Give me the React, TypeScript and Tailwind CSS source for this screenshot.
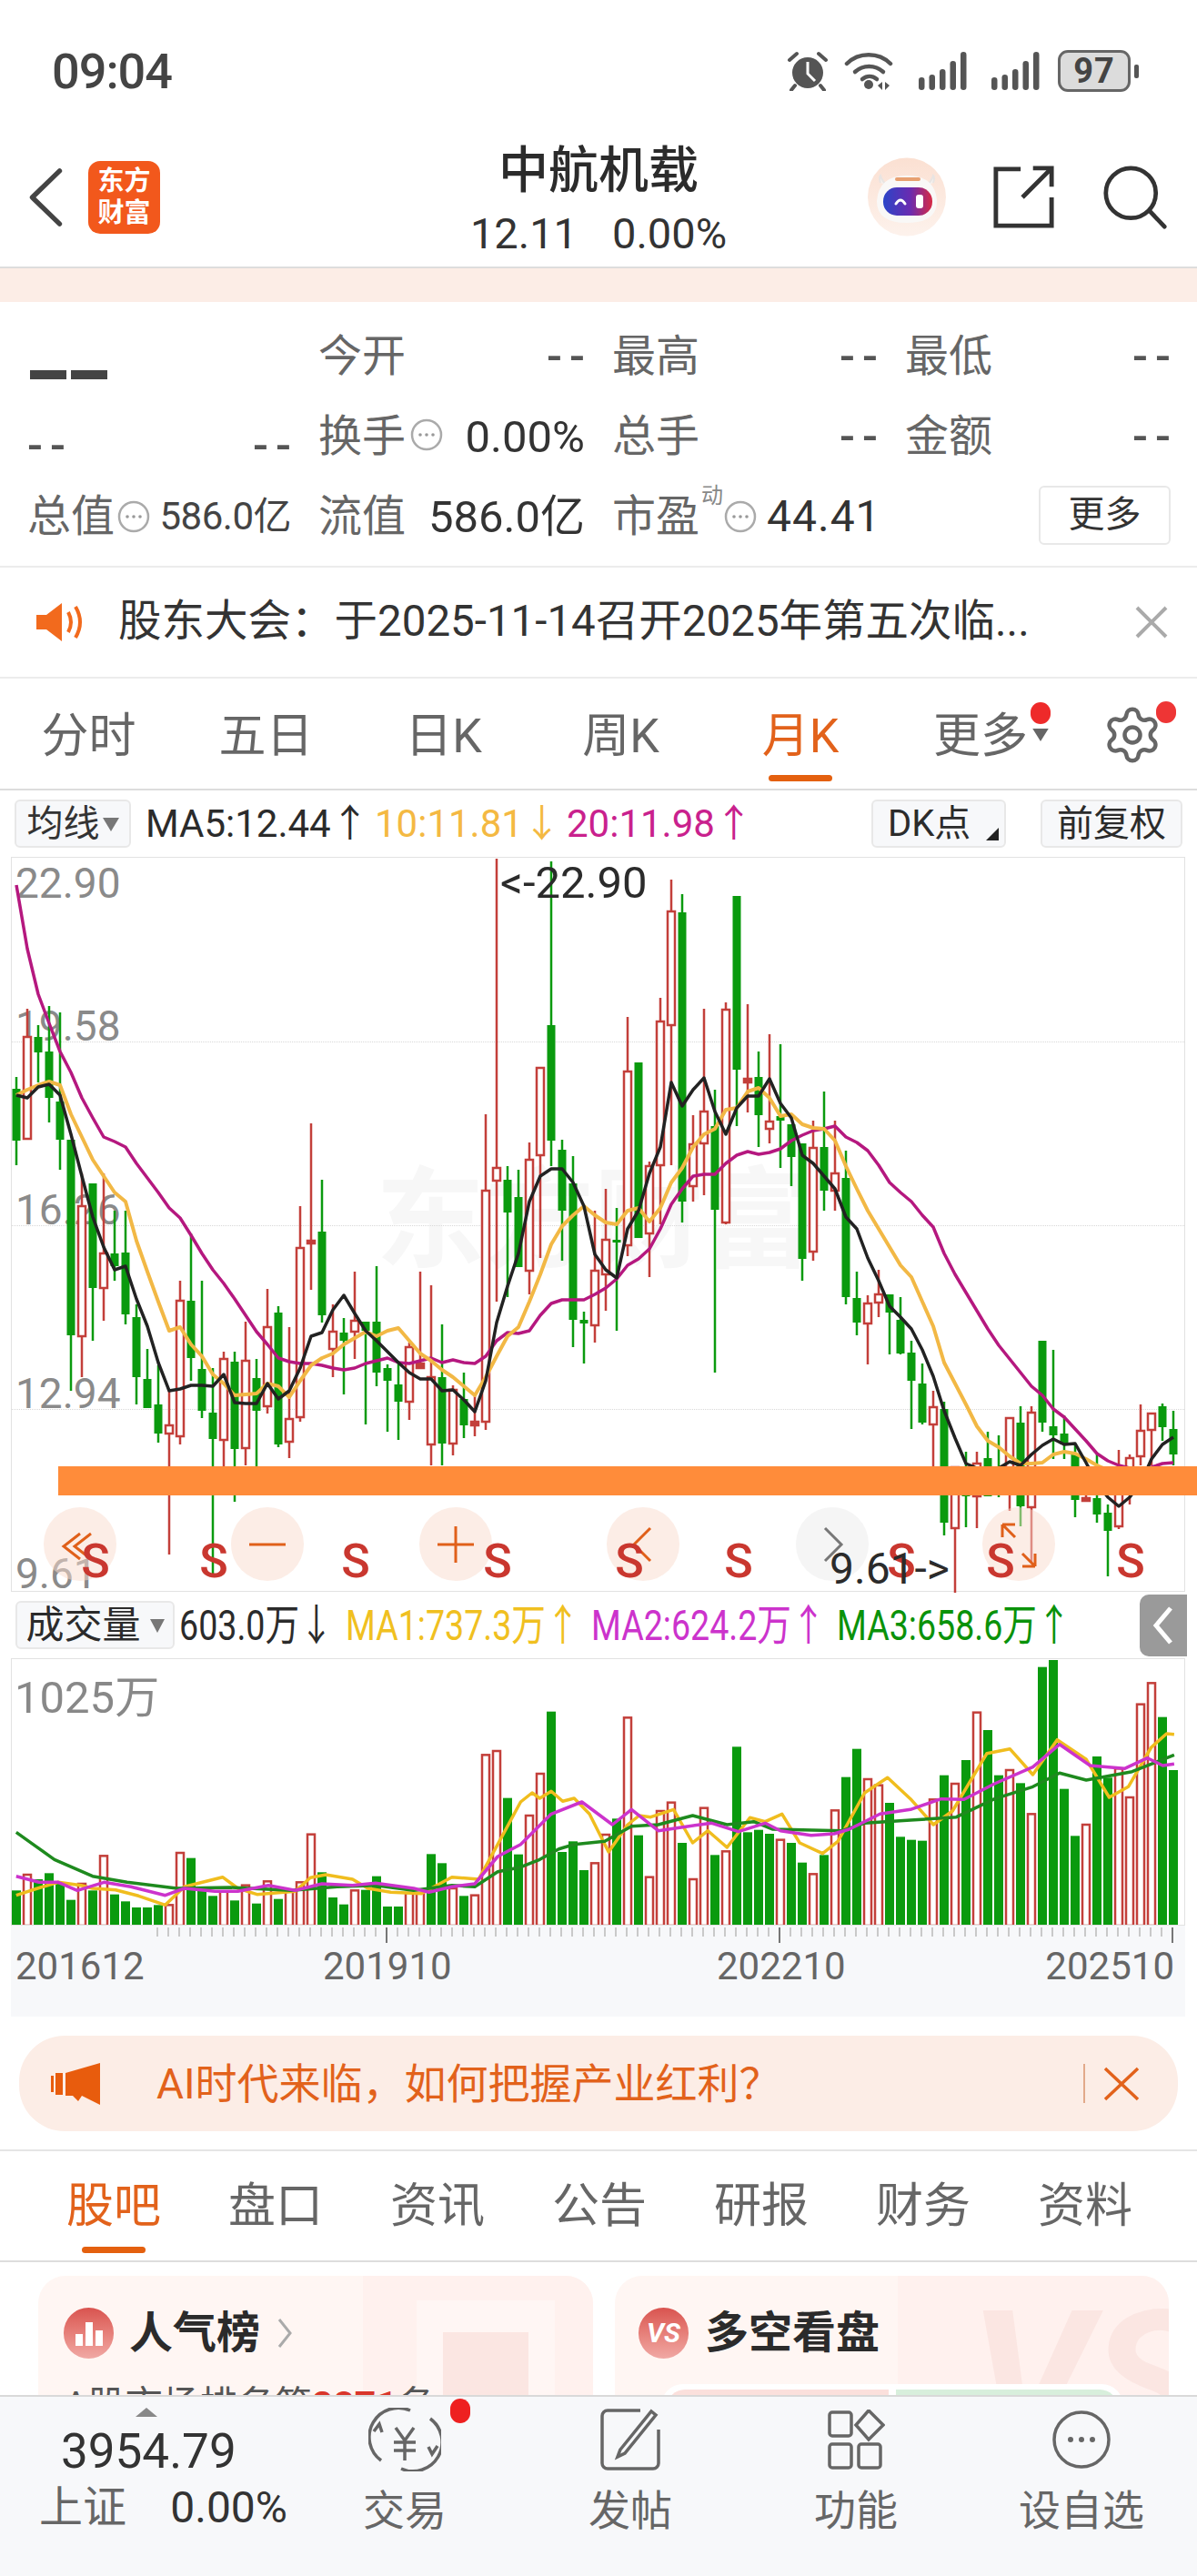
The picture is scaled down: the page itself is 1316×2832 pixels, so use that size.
import React from "react";
import { Settings } from "lucide-react";

type C = [string, number, number, number, number];
const candles: C[] = [
["g",1196,1253,1183,1280],["r",1139,1251,1108,1251],["g",1139,1156,1126,1189],["g",1155,1206,1105,1233],["g",1210,1252,1112,1285],["g",1252,1467,1252,1528],["r",1325,1468,1289,1513],["g",1300,1415,1300,1473],["r",1377,1415,1289,1451],["g",1377,1391,1330,1407],
["g",1376,1444,1330,1455],["g",1447,1513,1433,1543],["g",1515,1547,1482,1547],["g",1543,1575,1500,1585],["r",1566,1575,1527,1708],["r",1429,1578,1407,1587],["g",1429,1492,1355,1517],["g",1504,1550,1407,1558],["g",1552,1581,1503,1733],["r",1493,1582,1485,1617],
["g",1496,1592,1485,1650],["r",1495,1591,1452,1610],["g",1514,1550,1493,1643],["r",1458,1545,1416,1553],["g",1442,1587,1435,1590],["r",1559,1584,1458,1602],["r",1371,1557,1325,1562],["r",1363,1365,1234,1417],["g",1353,1445,1296,1453],["r",1463,1482,1433,1513],
["g",1464,1473,1448,1532],["r",1451,1463,1397,1493],["g",1452,1462,1452,1565],["g",1452,1508,1391,1523],["g",1503,1517,1499,1573],["g",1521,1540,1498,1582],["r",1480,1540,1475,1560],["r",1498,1503,1397,1503],["r",1513,1587,1412,1610],["g",1513,1586,1455,1610],
["r",1527,1586,1522,1599],["g",1537,1566,1508,1580],["r",1562,1566,1533,1578],["r",1308,1562,1224,1571],["r",1283,1297,943,1430],["g",1296,1332,1281,1425],["g",1315,1392,1285,1392],["r",1274,1396,1255,1422],["r",1173,1269,1173,1382],["g",1126,1253,946,1281],
["g",1263,1330,1252,1385],["g",1300,1450,1270,1480],["g",1450,1454,1441,1498],["r",1396,1456,1330,1475],["r",1362,1400,1306,1440],["g",1362,1365,1327,1462],["r",1177,1368,1117,1380],["g",1167,1360,1167,1360],["r",1281,1355,1276,1403],["r",1122,1280,1096,1345],
["r",1001,1126,966,1280],["g",1002,1320,982,1343],["r",1257,1303,1225,1320],["r",1221,1256,1108,1313],["g",1237,1329,1197,1508],["r",1109,1343,1101,1345],["g",984,1175,984,1237],["r",1185,1189,1103,1222],["g",1183,1225,1155,1260],["r",1232,1240,1136,1256],
["g",1226,1231,1147,1283],["g",1235,1271,1235,1303],["g",1256,1383,1256,1407],["r",1261,1375,1231,1385],["g",1260,1308,1199,1330],["r",1289,1308,1231,1330],["g",1294,1425,1264,1433],["g",1426,1453,1397,1467],["r",1432,1454,1423,1499],["r",1422,1431,1395,1447],
["g",1422,1442,1422,1488],["g",1450,1487,1425,1488],["g",1486,1517,1473,1570],["g",1520,1563,1498,1565],["r",1546,1565,1528,1612],["g",1548,1673,1540,1687],["r",1612,1679,1612,1750],["g",1612,1644,1595,1678],["r",1608,1644,1595,1679],["g",1602,1644,1573,1640],
["g",1612,1640,1577,1645],["r",1558,1620,1558,1660],["g",1563,1655,1545,1677],["r",1552,1656,1545,1717],["g",1473,1563,1473,1573],["g",1567,1577,1483,1603],["g",1575,1587,1555,1603],["g",1597,1648,1587,1667],["r",1646,1648,1640,1650],["g",1646,1664,1597,1673],
["g",1662,1682,1653,1732],["r",1617,1677,1593,1680],["r",1602,1640,1598,1653],["r",1572,1600,1543,1610],["r",1553,1571,1553,1610],["g",1545,1568,1542,1583],["g",1570,1598,1550,1610],
];
const ma5=[1203,1206,1194,1191,1203,1246,1292,1337,1370,1395,1391,1427,1457,1497,1528,1526,1522,1522,1523,1510,1541,1542,1542,1520,1537,1528,1503,1468,1464,1439,1423,1443,1462,1473,1485,1497,1508,1515,1515,1528,1527,1538,1551,1517,1453,1413,1377,1320,1292,1284,1284,1299,1325,1378,1395,1404,1350,1330,1289,1260,1189,1215,1197,1184,1221,1246,1217,1204,1204,1185,1212,1228,1269,1278,1292,1306,1337,1350,1382,1407,1435,1447,1460,1483,1512,1550,1580,1608,1613,1613,1613,1606,1610,1598,1588,1581,1587,1586,1607,1630,1645,1655,1645,1630,1603,1587,1579];
const ma10=[1203,1197,1192,1188,1192,1224,1249,1274,1292,1310,1320,1363,1397,1430,1462,1458,1477,1490,1510,1520,1533,1532,1531,1520,1523,1535,1517,1500,1492,1487,1477,1470,1463,1468,1462,1459,1473,1487,1495,1505,1513,1523,1533,1513,1490,1468,1458,1430,1400,1367,1347,1335,1325,1335,1343,1345,1330,1327,1342,1327,1299,1283,1260,1246,1240,1219,1217,1199,1195,1206,1226,1224,1235,1239,1240,1253,1281,1306,1330,1350,1370,1390,1403,1430,1457,1497,1520,1543,1567,1583,1590,1600,1608,1608,1607,1598,1595,1597,1603,1610,1615,1620,1620,1620,1620,1620,1620];
const ma20=[972,1042,1092,1124,1155,1178,1206,1228,1249,1254,1260,1278,1294,1310,1327,1338,1357,1377,1395,1410,1427,1445,1463,1477,1492,1496,1498,1498,1500,1503,1505,1503,1498,1495,1492,1497,1498,1495,1492,1497,1494,1497,1498,1490,1473,1464,1465,1462,1445,1432,1428,1428,1428,1422,1415,1405,1390,1383,1372,1350,1323,1306,1292,1290,1290,1278,1269,1265,1268,1266,1262,1253,1247,1242,1240,1237,1249,1255,1264,1280,1299,1310,1320,1335,1348,1377,1400,1420,1440,1460,1478,1493,1508,1523,1533,1548,1557,1570,1583,1597,1605,1610,1613,1615,1612,1608,1607];
const cx=(i:number)=>17+12*i;
const pts=(a:number[])=>a.map((y,i)=>`${cx(i)},${y}`).join(" ");

const vols:[string,number][]=[["g",1012],["r",960],["g",975],["g",955],["g",985],["g",1043],["r",990],["g",1012],["r",898],["g",1025],["g",1048],["g",1068],["g",1068],["g",1060],["r",1060],["r",888],["g",905],["g",1012],["g",1030],["r",1015],["g",1045],["r",995],["g",1055],["r",982],["g",1040],["r",1010],["r",985],["r",827],["g",952],["g",1035],["g",1058],["r",1012],["g",1010],["g",965],["g",1065],["g",1065],["r",1020],["r",1020],["g",892],["g",922],["r",1005],["g",1030],["r",1028],["r",565],["r",552],["g",707],["g",893],["r",765],["r",627],["g",422],["g",885],["g",850],["g",945],["r",922],["r",828],["g",775],["r",442],["g",830],["r",968],["r",750],["r",722],["g",855],["r",975],["r",740],["g",895],["r",883],["g",538],["g",820],["g",812],["g",825],["r",845],["g",855],["g",920],["r",958],["g",895],["r",748],["g",638],["g",545],["r",645],["r",665],["g",723],["g",835],["g",845],["g",848],["r",712],["g",632],["r",660],["g",582],["r",425],["g",483],["g",632],["r",615],["g",658],["r",760],["g",275],["g",252],["g",677],["g",832],["r",795],["g",570],["g",640],["r",610],["r",705],["r",398],["r",328],["g",440],["g",615]];
const conv=(a:number[][])=>a.map(([x,y])=>`${(x/1.19).toFixed(1)},${(1740+y/3).toFixed(1)}`).join(" ");
const vYellow=conv([[20,1028],[48,1005],[75,985],[105,995],[120,1005],[150,1010],[180,1030],[215,1060],[240,1000],[290,968],[310,1005],[335,1025],[360,1020],[385,1015],[405,970],[425,960],[460,975],[480,1005],[510,1018],[550,1022],[590,968],[625,975],[650,860],[680,720],[695,690],[705,708],[720,685],[735,718],[750,708],[770,760],[795,885],[820,795],[835,765],[850,770],[880,745],[905,855],[925,815],[950,870],[980,772],[1000,785],[1022,760],[1045,855],[1075,890],[1095,850],[1130,690],[1160,640],[1190,710],[1220,795],[1245,750],[1290,560],[1320,545],[1350,630],[1382,515],[1420,580],[1450,705],[1475,670],[1505,540],[1525,495],[1535,497]]);
const vMag=conv([[20,965],[50,985],[75,985],[100,1012],[135,985],[170,1000],[215,1028],[240,1005],[280,1015],[310,1015],[350,995],[385,1012],[420,990],[460,995],[490,988],[540,1005],[560,1018],[590,1000],[620,990],[650,900],[680,860],[720,760],[760,720],[800,795],[825,745],[860,815],[900,800],[930,790],[965,818],[1000,790],[1020,815],[1060,830],[1090,825],[1110,810],[1150,760],[1190,745],[1230,710],[1260,712],[1300,660],[1350,605],[1385,530],[1425,600],[1470,610],[1500,575],[1520,600],[1535,595]]);
const vGreen=conv([[20,820],[45,865],[70,910],[120,965],[165,985],[230,1005],[300,1002],[380,1012],[440,1000],[490,995],[540,1012],[590,995],[620,1000],[650,950],[680,935],[705,910],[730,875],[750,860],[790,850],[825,800],[860,795],[905,765],[950,795],[985,785],[1010,810],[1100,815],[1130,790],[1190,780],[1250,770],[1300,710],[1350,670],[1385,625],[1420,648],[1480,620],[1535,565]]);

const RED="#c33f3a", GREEN="#0a9a0e";

function PriceSvg(){
  return <svg className="absolute left-0 top-0" width={1291} height={808} viewBox="12 942 1291 808">
    {candles.map(([c,t,b,h,l],i)=>{
      const x=cx(i), col=c==="r"?RED:GREEN;
      return <g key={i}>
        <line x1={x} x2={x} y1={h} y2={l} stroke={col} strokeWidth={2.5}/>
        {c==="r"
          ?<rect x={x-4} y={t} width={8} height={Math.max(b-t,3)} fill={b-t<6?RED:"#fff"} stroke={col} strokeWidth={2.5}/>
          :<rect x={x-4.5} y={t} width={9} height={Math.max(b-t,3)} fill={col}/>}
      </g>;
    })}
    <polyline points={pts(ma20)} fill="none" stroke="#b5187f" strokeWidth={3.5} strokeLinejoin="round"/>
    <polyline points={pts(ma10)} fill="none" stroke="#f2b845" strokeWidth={4} strokeLinejoin="round"/>
    <polyline points={pts(ma5)} fill="none" stroke="#222" strokeWidth={3.5} strokeLinejoin="round"/>
  </svg>;
}
function VolSvg(){
  return <svg className="absolute left-0 top-0" width={1291} height={294} viewBox="12 1823 1291 294">
    {vols.map(([c,y0],i)=>{
      const x=cx(i), y=1740+y0/3;
      return c==="r"
        ?<rect key={i} x={x-4} y={y} width={8} height={2116-y} fill="#fff" stroke={RED} strokeWidth={2.5}/>
        :<rect key={i} x={x-5} y={y} width={10} height={2117-y} fill={GREEN}/>;
    })}
    <polyline points={vYellow} fill="none" stroke="#f0bd1e" strokeWidth={3.5} strokeLinejoin="round"/>
    <polyline points={vGreen} fill="none" stroke="#1e8a1e" strokeWidth={3.5} strokeLinejoin="round"/>
    <polyline points={vMag} fill="none" stroke="#cc33cc" strokeWidth={3.5} strokeLinejoin="round"/>
  </svg>;
}
function Ticks(){
  const t=[];
  for(let i=13;i<=106;i++){const x=cx(i)-12;const major=i===34||i===70||i===106;
    t.push(<line key={i} x1={x} x2={x} y1={2} y2={major?19:12} stroke={major?"#777":"#c9c9c9"} strokeWidth={2}/>);}
  return <svg className="absolute left-0 top-0" width={1291} height={22} viewBox="0 0 1291 22">{t}</svg>;
}

function Info({c=""}:{c?:string}){
  return <svg className={c} width={36} height={36} viewBox="0 0 36 36"><circle cx={18} cy={18} r={16} fill="none" stroke="#aaa" strokeWidth={2.5}/><circle cx={11} cy={18} r={1.8} fill="#999"/><circle cx={18} cy={18} r={1.8} fill="#999"/><circle cx={25} cy={18} r={1.8} fill="#999"/></svg>;
}
function Bars(){
  return <svg width={53} height={42} viewBox="0 0 53 42" fill="#555">
    <rect x={0} y={28} width={6.5} height={14} rx={3.2}/><rect x={11.5} y={25} width={6.5} height={17} rx={3.2}/><rect x={23} y={19} width={6.5} height={23} rx={3.2}/><rect x={34.5} y={10} width={6.5} height={32} rx={3.2}/><rect x={46} y={0} width={6.5} height={42} rx={3.2}/>
  </svg>;
}
const Dash=({c=""}:{c?:string})=><span className={`text-[50px] leading-none text-[#555] font-medium tracking-[8px] mr-[-8px] ${c}`}>--</span>;
function Cell({l}:{l:string}){
  return <div className="flex items-center justify-between">
    <span className="text-[48px] leading-none text-[#666]">{l}</span>
    <Dash/>
  </div>;
}
function Circle({left,gray,children}:{left:number;gray?:boolean;children:React.ReactNode}){
  return <div className={`absolute top-[714px] w-[80px] h-[81px] rounded-full flex items-center justify-center ${gray?"bg-[#eeeeee]/60":"bg-[#f9dbcd]/50"}`} style={{left}}>{children}</div>;
}
const Ch=({d,c="#e0601a",w=3}:{d:string;c?:string;w?:number})=><svg width={60} height={60} viewBox="0 0 60 60" fill="none" stroke={c} strokeWidth={w}>
  <path d={d}/></svg>;

function PriceLabel({top,children}:{top:number;children:React.ReactNode}){
  return <div className="absolute left-[4px] text-[46px] leading-none text-[#8a8a8a]" style={{top}}>{children}</div>;
}
const SLabel=({x}:{x:number})=><div className="absolute top-[748px] w-[50px] text-center text-[52px] leading-none font-medium text-[#c9372f]" style={{left:x-12-25}}>S</div>;
const VolTxt=({w,c,ml,t}:{w:number;c:string;ml:number;t:string})=><span className={`block shrink-0 origin-left scale-x-[0.8] ${c}`} style={{width:w,marginLeft:ml}}>{t}</span>;

export default function App(){
  return <div className="w-[1316px] h-[2832px] flex flex-col overflow-hidden bg-white text-[#333] [font-family:Roboto,'Noto_Sans_CJK_SC',sans-serif]">
    <div className="flex-1 min-h-0 overflow-hidden">
      {/* status bar */}
      <div className="h-[145px] pl-[57px] pr-[64px] pt-[50px] flex items-start justify-between">
        <span className="text-[54px] leading-[58px] font-medium text-[#444] tracking-[-1px]">09:04</span>
        <div className="flex items-center mt-[5px]">
          <svg width={46} height={44} viewBox="0 0 46 44"><circle cx={23} cy={24} r={17} fill="#555"/><path d="M23 12v13l8 8" stroke="#fff" strokeWidth={3} fill="none"/><path d="M3 10l8-7M43 10l-8-7M9 38l-4 5M37 38l4 5" stroke="#555" strokeWidth={4} fill="none" strokeLinecap="round"/></svg>
          <svg className="ml-[17px]" width={56} height={44} viewBox="0 0 56 44" fill="none" stroke="#555" strokeWidth={4.5} strokeLinecap="round"><path d="M3 14C16 1 38 1 51 14"/><path d="M12 23c9-8 22-8 31 0"/><path d="M20 31c5-4 11-4 16 0"/><circle cx={27} cy={37} r={5} fill="#555" stroke="none"/><path d="m37 38 5-4v9zM50 38l-5-4v9z" fill="#555" stroke="none"/></svg>
          <div className="ml-[26px]"><Bars/></div>
          <div className="ml-[27px]"><Bars/></div>
          <div className="flex items-center ml-[20px]">
            <div className="w-[80px] h-[46px] rounded-[11px] border-[3px] border-[#666] bg-[#dcdcdc] flex items-center justify-center text-[38px] font-bold leading-none text-[#444] tracking-[1px]">97</div>
            <div className="w-[5px] h-[15px] bg-[#555] rounded-[2px] ml-[4px]"/>
          </div>
        </div>
      </div>
      {/* header */}
      <div className="h-[150px] border-b-2 border-[#ddd] relative flex items-start justify-center">
        <svg className="absolute left-[30px] top-[40px]" width={40} height={64} viewBox="0 0 40 66" fill="none" stroke="#444" strokeWidth={5.5} strokeLinecap="round" strokeLinejoin="round"><path d="M36 3 5 33l31 30"/></svg>
        <div className="absolute left-[97px] top-[32px] w-[79px] h-[80px] rounded-[13px] bg-[#f2581c] flex flex-col items-center justify-center text-white text-[29px] leading-[35px] font-bold"><span>东方</span><span>财富</span></div>
        <div className="flex flex-col items-center mt-[11px]">
          <span className="text-[55px] leading-[62px] font-medium text-[#2b2b2b]">中航机载</span>
          <div className="flex gap-[38px] text-[47px] leading-[50px] mt-[14px] text-[#333]"><span>12.11</span><span>0.00%</span></div>
        </div>
        <svg className="absolute left-[954px] top-[28px]" width={86} height={87} viewBox="0 0 86 87">
          <defs><linearGradient id="vz" x1="0" x2="1"><stop offset="0" stopColor="#2b45c8"/><stop offset="0.55" stopColor="#6a2bb0"/><stop offset="1" stopColor="#d62a45"/></linearGradient>
          <linearGradient id="pc" x1="0" x2="0" y1="0" y2="1"><stop offset="0" stopColor="#fbe0d2"/><stop offset="1" stopColor="#fdf2ec"/></linearGradient></defs>
          <circle cx={43} cy={43.5} r={43} fill="url(#pc)"/>
          <path d="M14 28q-2-6 0-8 2 8 10 12M72 28q2-6 0-8-2 8-10 12" fill="#f6f1ee" stroke="#e8e4e2" strokeWidth={2}/>
          <path d="M10 48q2-28 33-28t33 28q0 24-33 24T10 48z" fill="#f9f8f7"/>
          <path d="M32 24h24" stroke="#e8a070" strokeWidth={4} strokeLinecap="round"/>
          <rect x={17} y={33} width={54} height={31} rx={15} fill="url(#vz)"/>
          <path d="M31 51q5-8 10 0" stroke="#fff" strokeWidth={3} fill="none" strokeLinecap="round"/><rect x={53} y={41} width={8} height={15} rx={3} fill="#fff"/>
        </svg>
        <svg className="absolute left-[1090px] top-[37px]" width={72} height={70} viewBox="0 0 72 72" fill="none" stroke="#333" strokeWidth={5}><path d="M32 4H4v64h63V36"/><path d="M34 36 66 4M46 3h21v21"/></svg>
        <svg className="absolute left-[1210px] top-[36px]" width={76} height={72} viewBox="0 0 76 76" fill="none" stroke="#333" strokeWidth={5}><circle cx={33} cy={33} r={29}/><path d="m55 54 17 18" strokeLinecap="round"/></svg>
      </div>
      <div className="h-[37px] bg-[#fcede6]"/>
      {/* quote */}
      <div className="h-[292px] border-b-2 border-[#ececec] pt-[16px] pl-[30px] pr-[27px] grid grid-cols-[290px_293px_292px_292px] gap-x-[30px] auto-rows-[88px]">
        <div className="flex items-center h-[88px]"><span className="mt-[39px] ml-[3px] flex gap-[5px]"><span className="w-[40px] h-[10px] bg-[#444]"/><span className="w-[40px] h-[10px] bg-[#444]"/></span></div>
        <Cell l="今开"/><Cell l="最高"/><Cell l="最低"/>
        <div className="flex items-center justify-between"><Dash c="mt-[20px]"/><Dash c="mt-[20px]"/></div>
        <div className="flex items-center justify-between">
          <div className="flex items-center"><span className="text-[48px] leading-none text-[#666]">换手</span><Info c="ml-[5px] mt-[-4px]"/></div>
          <span className="text-[49px] leading-none text-[#333]">0.00%</span>
        </div>
        <Cell l="总手"/><Cell l="金额"/>
        <div className="flex items-center justify-between">
          <div className="flex items-center"><span className="text-[48px] leading-none text-[#666]">总值</span><Info c="ml-[3px]"/></div>
          <span className="text-[42px] leading-none text-[#444] tracking-[-0.5px]">586.0亿</span>
        </div>
        <div className="flex items-center justify-between">
          <span className="text-[48px] leading-none text-[#666]">流值</span>
          <span className="text-[49px] leading-none text-[#333]">586.0亿</span>
        </div>
        <div className="flex items-center relative col-span-2">
          <span className="text-[48px] leading-none text-[#666]">市盈</span>
          <span className="text-[24px] leading-none text-[#888] ml-[2px] mt-[-46px]">动</span>
          <Info c="ml-[1px]"/>
          <span className="text-[48px] leading-none text-[#333] ml-[11px] tracking-[1px]">44.41</span>
          <div className="ml-auto w-[145px] h-[65px] mt-[-4px] rounded-[6px] border-2 border-[#e8e8e8] flex items-center justify-center text-[40px] leading-none text-[#333]">更多</div>
        </div>
      </div>
      {/* notice */}
      <div className="h-[122px] border-b-2 border-[#ececec] pl-[38px] pr-[32px] flex items-center">
        <svg width={56} height={44} viewBox="0 0 56 44" fill="#f26a1d"><path d="M2 14h11L30 1v42L13 30H2z"/><path d="M37 11q6 11 0 22M45 5q10 17 0 34" stroke="#f26a1d" strokeWidth={4} fill="none"/></svg>
        <span className="ml-[36px] text-[47.5px] leading-none text-[#333] whitespace-nowrap">股东大会：于2025-11-14召开2025年第五次临...</span>
        <svg className="ml-auto" width={36} height={36} viewBox="0 0 36 36" fill="none" stroke="#aaa" strokeWidth={4}><path d="M2 2l32 32M34 2 2 34"/></svg>
      </div>
      {/* period tabs */}
      <div className="h-[123px] border-b-2 border-[#ddd] flex text-[52px] leading-none text-[#666]">
        {["分时","五日","日K","周K"].map(t=><div key={t} className="w-[195px] pt-[38px] text-center">{t}</div>)}
        <div className="w-[200px] pt-[38px] flex flex-col items-center text-[#e2621b]"><span>月K</span><span className="w-[70px] h-[7px] rounded-full bg-[#e4600f] mt-[16px]"/></div>
        <div className="w-[196px] pt-[38px] text-center relative"><span>更多</span>
          <span className="absolute left-[153px] top-[26px] w-[22px] h-[24px] rounded-full bg-[#ee2a2a]"/>
          <svg className="absolute left-[155px] top-[55px]" width={18} height={14} viewBox="0 0 20 16" fill="#666"><path d="M0 0h20L10 16z"/></svg>
        </div>
        <div className="flex-1 relative"><Settings className="absolute left-[35px] top-[28px]" size={68} strokeWidth={1.6} color="#666"/>
          <span className="absolute left-[95px] top-[25px] w-[22px] h-[24px] rounded-full bg-[#ee3535]"/>
        </div>
      </div>
      {/* MA row */}
      <div className="h-[73px] pl-[16px] pr-[16px] flex items-center text-[42px] leading-none whitespace-nowrap">
        <div className="w-[128px] h-[53px] shrink-0 rounded-[6px] border-2 border-[#e8e8e8] bg-[#f7f8fa] flex items-center justify-center gap-[3px] text-[40px] text-[#333]">均线<svg width={18} height={18} viewBox="0 0 18 18" fill="#777"><path d="M0 2h18L9 17z"/></svg></div>
        <span className="ml-[16px] w-[236px] shrink-0 text-[#2b2b2b]">MA5:12.44↑</span>
        <span className="ml-[16px] w-[211px] shrink-0 text-[#f4b942]">10:11.81↓</span>
        <span className="text-[#c9218d]">20:11.98↑</span>
        <div className="ml-auto relative w-[148px] h-[53px] rounded-[6px] border-2 border-[#e8e8e8] bg-[#f7f8fa] flex items-center pl-[16px] text-[#2b2b2b] text-[40px]">DK点<svg className="absolute right-[6px] bottom-[6px]" width={14} height={14} viewBox="0 0 14 14" fill="#222"><path d="M14 0v14H0z"/></svg></div>
        <div className="ml-[38px] w-[156px] h-[53px] rounded-[6px] border-2 border-[#e8e8e8] bg-[#f7f8fa] flex items-center justify-center text-[40px] text-[#2b2b2b]">前复权</div>
      </div>
      {/* price chart */}
      <div className="ml-[12px] w-[1291px] h-[808px] relative border border-[#e2e2e2]">
        <div className="absolute left-[400px] top-[340px] text-[120px] leading-none font-bold text-[#f7f7f7] whitespace-nowrap">东方财富</div>
        <div className="absolute left-0 right-0 top-[202px] border-t border-dotted border-[#d8d8d8]"/>
        <div className="absolute left-0 right-0 top-[404px] border-t border-dotted border-[#d8d8d8]"/>
        <div className="absolute left-0 right-0 top-[606px] border-t border-dotted border-[#d8d8d8]"/>
        <PriceLabel top={5}>22.90</PriceLabel>
        <PriceLabel top={162}>19.58</PriceLabel>
        <PriceLabel top={364}>16.26</PriceLabel>
        <PriceLabel top={566}>12.94</PriceLabel>
        <PriceLabel top={764}>9.61</PriceLabel>
        <PriceSvg/>
        <div className="absolute left-[51px] top-[669px] w-[1253px] h-[32px] bg-[#ff8c3a]"/>
        <Circle left={35}><Ch d="M30 18 12 32l18 14M42 18 24 32l18 14"/></Circle>
        <Circle left={241}><Ch d="M10 30h40"/></Circle>
        <Circle left={448}><Ch d="M10 30h40M30 10v40"/></Circle>
        <Circle left={654}><Ch d="M38 12 20 30l18 18"/></Circle>
        <Circle left={862} gray><Ch d="M22 12l18 18-18 18" c="#777"/></Circle>
        <Circle left={1067}><Ch d="M12 8h14M12 8v14M12 8l14 14M48 54H34M48 54V40M48 54 34 40"/></Circle>
        {[104,234,390,546,691,811,990,1099,1242].map(x=><SLabel key={x} x={x}/>)}
        <div className="absolute left-[537px] top-[3px] text-[49px] leading-none text-[#2b2b2b]">&lt;-22.90</div>
        <div className="absolute left-[899px] top-[758px] text-[48px] leading-none text-[#2b2b2b]">9.61-&gt;</div>
      </div>
      {/* volume row */}
      <div className="h-[73px] pl-[17px] flex items-center text-[47px] leading-none whitespace-nowrap">
        <div className="w-[175px] h-[53px] shrink-0 rounded-[6px] border-2 border-[#e8e8e8] bg-[#f7f8fa] flex items-center justify-center gap-[10px] text-[42px] text-[#2b2b2b]">成交量<svg width={16} height={16} viewBox="0 0 16 16" fill="#777"><path d="M0 1h16L8 16z"/></svg></div>
        <VolTxt w={167} c="text-[#2b2b2b]" ml={5} t="603.0万↓"/>
        <VolTxt w={254} c="text-[#f0c020]" ml={16} t="MA1:737.3万↑"/>
        <VolTxt w={254} c="text-[#cc33cc]" ml={16} t="MA2:624.2万↑"/>
        <VolTxt w={254} c="text-[#0a920a]" ml={16} t="MA3:658.6万↑"/>
        <div className="ml-[79px] w-[52px] h-[68px] shrink-0 rounded-l-[10px] bg-[#9a9a9a] flex items-center justify-center"><svg width={24} height={44} viewBox="0 0 24 44" fill="none" stroke="#fff" strokeWidth={5}><path d="M20 3 4 22l16 19"/></svg></div>
      </div>
      {/* volume chart */}
      <div className="ml-[12px] w-[1291px] h-[294px] relative border border-[#e2e2e2] overflow-hidden">
        <VolSvg/>
        <div className="absolute left-[3px] top-[18px] text-[49px] leading-none text-[#888]">1025万</div>
      </div>
      {/* axis */}
      <div className="ml-[12px] w-[1291px] h-[100px] relative bg-[#f7f8fa] text-[42px] leading-none text-[#666]">
        <Ticks/>
        <span className="absolute left-[5px] top-[24px]">201612</span>
        <span className="absolute left-[343px] top-[24px]">201910</span>
        <span className="absolute left-[776px] top-[24px]">202210</span>
        <span className="absolute right-[12px] top-[24px]">202510</span>
      </div>
      {/* ad */}
      <div className="pt-[21px] pb-[20px] pl-[21px] pr-[21px] border-b-2 border-[#e5e5e5]">
        <div className="h-[105px] rounded-[50px] bg-[#fcede6] flex items-center pl-[35px] pr-[42px]">
          <svg width={56} height={46} viewBox="0 0 56 46" fill="#e85c0d"><rect x={0} y={14} width={3} height={18}/><rect x={5} y={11} width={8} height={24}/><path d="M16 11 54 0v46L34 36l-4 6-6-6h-8z"/></svg>
          <span className="ml-[60px] text-[46px] leading-none text-[#e2621b]">AI时代来临，如何把握产业红利？</span>
          <span className="ml-auto w-[2px] h-[43px] bg-[#e2a98a]"/>
          <svg className="ml-[20px]" width={40} height={38} viewBox="0 0 40 38" fill="none" stroke="#e2621b" strokeWidth={3.5}><path d="m2 2 36 34M38 2 2 36"/></svg>
        </div>
      </div>
      {/* info tabs */}
      <div className="h-[122px] border-b-2 border-[#ddd] pl-[36px] pr-[34px] grid grid-cols-7 text-[52px] leading-none text-[#666]">
        <div className="pt-[35px] flex flex-col items-center text-[#e2621b]"><span>股吧</span><span className="w-[70px] h-[7px] rounded-full bg-[#e4600f] mt-[18px]"/></div>
        {["盘口","资讯","公告","研报","财务","资料"].map(t=><div key={t} className="pt-[35px] text-center">{t}</div>)}
      </div>
      {/* cards */}
      <div className="pt-[15px] pl-[42px] pr-[31px] flex gap-[24px]">
        <div className="w-[610px] h-[300px] relative rounded-[30px] overflow-hidden bg-[#fff6f3] pl-[28px] pt-[35px]">
          <div className="absolute left-[357px] top-0 w-[253px] h-[300px] bg-[#fff1ee]"/>
          <div className="absolute left-[416px] top-[27px] w-[152px] h-[273px] bg-[#fff6f4]"/>
          <div className="absolute left-[445px] top-[62px] w-[94px] h-[240px] bg-[#fbe6e2]"/>
          <div className="relative flex items-center">
            <div className="w-[55px] h-[56px] rounded-full bg-gradient-to-b from-[#d9534f] to-[#f0a8a4] flex items-center justify-center"><svg width={32} height={30} viewBox="0 0 32 30" fill="#fff"><rect x={1} y={16} width={8} height={13}/><rect x={12} y={3} width={8} height={26}/><rect x={23} y={12} width={8} height={17}/></svg></div>
            <span className="ml-[17px] text-[48px] leading-none font-bold text-[#2b2b2b]">人气榜</span>
            <svg className="ml-[18px]" width={18} height={34} viewBox="0 0 18 34" fill="none" stroke="#aaa" strokeWidth={3}><path d="m3 2 12 15L3 32"/></svg>
          </div>
          <div className="relative mt-[31px] text-[41px] leading-none text-[#555]">A股市场排名第<span className="font-bold text-[#d9362b]">2871</span>名</div>
        </div>
        <div className="w-[609px] h-[300px] relative rounded-[30px] overflow-hidden bg-[#fff6f3] pl-[26px] pt-[35px]">
          <div className="absolute left-[311px] top-0 w-[298px] h-[300px] bg-[#fff1ee]"/>
          <div className="absolute left-[390px] top-[10px] text-[210px] leading-none font-bold italic text-[#fbe6e2]">VS</div>
          <div className="relative flex items-center">
            <div className="w-[55px] h-[56px] rounded-full bg-gradient-to-b from-[#d9534f] to-[#f0a8a4] flex items-center justify-center text-white italic font-bold text-[30px] leading-none">VS</div>
            <span className="ml-[18px] text-[48px] leading-none font-bold text-[#2b2b2b]">多空看盘</span>
          </div>
          <div className="relative mt-[28px] ml-[25px] w-[508px] h-[70px] rounded-t-[24px] bg-white pt-[6px] px-[6px] flex gap-[8px]">
            <div className="flex-1 bg-[#fbe0dc] rounded-tl-[20px]"/><div className="flex-1 bg-[#d8efdc] rounded-tr-[20px]"/>
          </div>
        </div>
      </div>
    </div>
    {/* bottom nav */}
    <div className="h-[199px] shrink-0 bg-[#f7f8fa] border-t-2 border-[#d9d9d9] flex">
      <div className="w-[321px] pt-[12px] relative">
        <svg className="absolute left-[149px] top-[12px]" width={24} height={10} viewBox="0 0 24 10" fill="#888"><path d="M12 0l12 10H0z"/></svg>
        <div className="pl-[67px] mt-[20px] text-[53px] leading-[56px] text-[#333]">3954.79</div>
        <div className="pl-[43px] pr-[5px] mt-[6px] flex justify-between items-center text-[48px] leading-[56px]"><span className="text-[#666]">上证</span><span className="text-[#333]">0.00%</span></div>
      </div>
      {[
        {t:"交易",i:<svg width={80} height={70} viewBox="0 0 80 70" fill="none" stroke="#666" strokeWidth={3.5}><path d="M46 3a32 32 0 0 0-32 55M36 67a32 32 0 0 0 32-55"/><path d="m6 26 6-8 3 9M76 42l-6 9-4-8"/><path d="M30 22l10 14 10-14M28 38h24M28 47h24M40 36v22"/></svg>},
        {t:"发帖",i:<svg width={70} height={70} viewBox="0 0 70 70" fill="none" stroke="#666" strokeWidth={3.5}><path d="M46 3H10a6 6 0 0 0-6 6v52a6 6 0 0 0 6 6h50a6 6 0 0 0 6-6V24"/><path d="m24 46 34-42 5 4-34 42-8 4z"/></svg>},
        {t:"功能",i:<svg width={64} height={66} viewBox="0 0 64 66" fill="none" stroke="#666" strokeWidth={3.5}><rect x={3} y={3} width={24} height={26} rx={3}/><path d="m46 1 16 16-16 16-14-16z"/><rect x={3} y={38} width={24} height={26} rx={3}/><rect x={35} y={38} width={24} height={26} rx={3}/></svg>},
        {t:"设自选",i:<svg width={66} height={66} viewBox="0 0 66 66" fill="none" stroke="#666" strokeWidth={3.5}><circle cx={33} cy={33} r={30}/><circle cx={21} cy={33} r={3} fill="#666" stroke="none"/><circle cx={33} cy={33} r={3} fill="#666" stroke="none"/><circle cx={45} cy={33} r={3} fill="#666" stroke="none"/></svg>},
      ].map((n,k)=><div key={n.t} className="w-[248px] relative flex flex-col items-center pt-[12px]">
        <div className="h-[70px] flex items-center justify-center">{n.i}</div>
        <span className="mt-[20px] text-[46px] leading-none text-[#666]">{n.t}</span>
        {k===0&&<span className="absolute left-[174px] top-[2px] w-[22px] h-[27px] rounded-full bg-[#ee2020]"/>}
      </div>)}
    </div>
  </div>;
}
